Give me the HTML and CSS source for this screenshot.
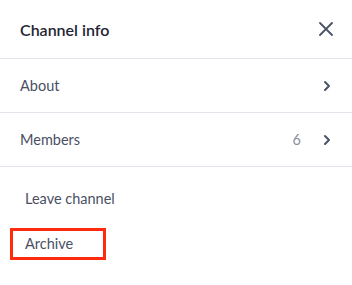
FILE: index.html
```html
<!DOCTYPE html>
<html>
<head>
  <title>Channel info</title>
  <link rel="stylesheet" href="styles.css">
</head>
<body>
  <div class="panel">
    <div class="panel-header">
      <h2 class="panel-title">Channel info</h2>
      <button class="close-btn" aria-label="Close">
        <svg width="14" height="14" viewBox="0 0 14 14"><path d="M1 1L13 13M13 1L1 13" stroke="#4a5266" stroke-width="1.8" stroke-linecap="round"/></svg>
      </button>
    </div>
    <div class="row">
      <span class="row-label">About</span>
      <span class="row-right">
        <svg class="chevron" width="8" height="12" viewBox="0 0 8 12"><path d="M2 2L6 6L2 10" fill="none" stroke="#4a5266" stroke-width="2" stroke-linecap="round" stroke-linejoin="round"/></svg>
      </span>
    </div>
    <div class="row">
      <span class="row-label">Members</span>
      <span class="row-right">
        <span class="count">6</span>
        <svg class="chevron" width="8" height="12" viewBox="0 0 8 12"><path d="M2 2L6 6L2 10" fill="none" stroke="#4a5266" stroke-width="2" stroke-linecap="round" stroke-linejoin="round"/></svg>
      </span>
    </div>
    <div class="actions">
      <div class="action">Leave channel</div>
      <div class="action highlighted">Archive</div>
    </div>
  </div>
</body>
</html>
```

FILE: styles.css
```css
body {
  margin: 0;
  padding: 0;
  background-color: #fff;
  font-family: Lato, "Open Sans", sans-serif;
}

.panel {
  width: 352px;
}

.panel-header {
  display: flex;
  align-items: center;
  justify-content: space-between;
  height: 58px;
  padding: 0 20px;
  border-bottom: 1px solid #e3e5ec;
}

.panel-title {
  margin: 0;
  font-size: 16px;
  font-weight: 600;
  color: #1f2535;
}

.close-btn {
  border: none;
  background: none;
  padding: 0;
  margin-right: -1px;
  display: flex;
}

.row {
  display: flex;
  align-items: center;
  justify-content: space-between;
  height: 53px;
  padding: 0 20px;
  border-bottom: 1px solid #e3e5ec;
}

.row-label {
  font-size: 14.5px;
  color: #4a5064;
}

.row-right {
  display: flex;
  align-items: center;
  gap: 22px;
}

.count {
  font-size: 14.5px;
  color: #8a8f9c;
}

.chevron {
  margin-right: 1px;
}

.actions {
  display: flex;
  flex-direction: column;
  align-items: flex-start;
  gap: 13px;
  padding: 16px 10px 0;
}

.action {
  box-sizing: border-box;
  padding: 4px 12px;
  font-size: 14.5px;
  line-height: 18px;
  color: #4a5064;
  border: 3px solid transparent;
  white-space: nowrap;
}

.action.highlighted {
  width: 96px;
  border-color: #ff2a10;
}
```
